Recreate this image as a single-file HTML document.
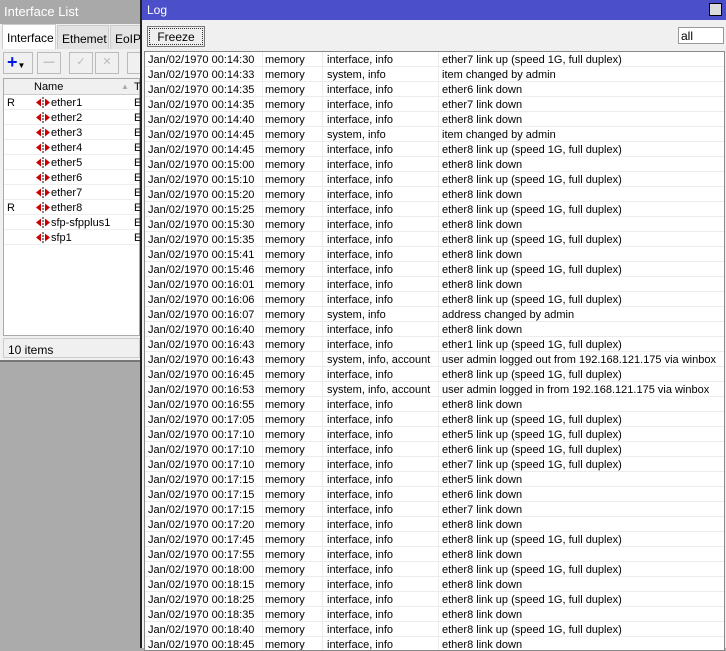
<!DOCTYPE html>
<html><head><meta charset="utf-8"><style>
*{margin:0;padding:0;box-sizing:border-box}
body{width:726px;height:648px;overflow:hidden;background:#ababab;font-family:"Liberation Sans",sans-serif;font-size:11px;color:#000;position:relative}
#ifw{position:absolute;left:0;top:0;width:142px;height:362px;background:#f0f0f0;border-right:1px solid #888;border-bottom:2px solid #777}
#ift{height:24px;background:#a9a9a9;color:#fff;font-size:13px;padding:4px 0 0 4px}
.tab{position:absolute;top:25px;height:24px;font-size:12px;padding:6px 0 0 4px;border:1px solid #ccc;border-bottom:none}
.tb{position:absolute;top:52px;height:22px;width:24px;border:1px solid #bbb;background:#f0f0f0}
#iflist{position:absolute;left:3px;top:78px;width:137px;height:258px;background:#fff;border:1px solid #aaa}
.ir{height:15px;line-height:16px;border-bottom:1px solid #eee;position:relative;white-space:nowrap}
.ir span{position:absolute}
.ir svg{vertical-align:-2px;margin-right:1px}
#status{position:absolute;left:3px;top:338px;width:137px;height:20px;border:1px solid #ccc;padding:4px 4px;font-size:12px}
#log{position:absolute;left:140px;top:0;width:586px;height:648px;background:#f0f0f0;border-left:2px solid #222}
#lt{height:20px;background:#4b4fc9;color:#fff;font-size:12px;padding:3px 0 0 5px;position:relative}
#freeze{position:absolute;left:5px;top:26px;width:58px;height:21px;border:1px solid #777;background:#eee;font-size:12px;text-align:center;line-height:21px;outline:1px dotted #333;outline-offset:-3px}
#all{position:absolute;left:536px;top:27px;width:46px;height:17px;background:#fff;border:1px solid #999;font-size:12px;padding-left:2px;line-height:17px}
#list{position:absolute;left:2px;top:51px;width:581px;height:600px;background:#fff;border:1px solid #888;overflow:hidden}
.r{height:15px;line-height:16px;border-bottom:1px solid #ececec;position:relative;white-space:nowrap;font-size:11px}
.r span{position:absolute;top:0;height:15px;padding-left:3px}
.r .a{left:0;width:118px;border-right:1px solid #ececec}
.r .b{left:118px;width:60px;border-right:1px solid #ececec;padding-left:2px}
.r .c{left:178px;width:116px;border-right:1px solid #ececec;padding-left:4px}
.r .d{left:294px;padding-left:3px}
</style></head><body>
<svg width="0" height="0" style="position:absolute"><defs><symbol id="ic" viewBox="0 0 14 11"><path d="M0 5.5L5 1.5V9.5Z" fill="#c00"/><path d="M14 5.5L9 1.5V9.5Z" fill="#c00"/><path d="M7 0V11" stroke="#333" stroke-width="1.2" stroke-dasharray="2 1"/></symbol></defs></svg>
<div id="ifw">
<div id="ift">Interface List</div>
<div class="tab" style="left:2px;width:54px;background:#fff;height:25px;top:24px">Interface</div>
<div class="tab" style="left:57px;width:52px;background:#e3e3e3">Ethemet</div>
<div class="tab" style="left:110px;width:32px;background:#e3e3e3">EoIP</div>
<div class="tb" style="left:3px;width:30px;color:#0018e0;font-size:18px;font-weight:bold;line-height:18px;padding-left:3px">+<span style="font-size:8px;color:#000">▼</span></div>
<div class="tb" style="left:37px;color:#999;text-align:center;line-height:18px">—</div>
<div class="tb" style="left:69px;color:#bbb;text-align:center;line-height:18px">✓</div>
<div class="tb" style="left:95px;color:#bbb;text-align:center;line-height:18px">✕</div>
<div class="tb" style="left:127px;width:14px"></div>
<div id="iflist">
<div class="ir" style="background:#f0f0f0;height:16px;border-bottom:1px solid #ccc"><span style="left:30px">Name</span><span style="left:117px;color:#aaa;font-size:8px">▲</span><span style="left:130px">T</span></div>
<div class="ir"><span style="left:3px">R</span><span style="left:32px"><svg width="14" height="11"><use href="#ic"/></svg>ether1</span><span style="left:130px">E</span></div>
<div class="ir"><span style="left:32px"><svg width="14" height="11"><use href="#ic"/></svg>ether2</span><span style="left:130px">E</span></div>
<div class="ir"><span style="left:32px"><svg width="14" height="11"><use href="#ic"/></svg>ether3</span><span style="left:130px">E</span></div>
<div class="ir"><span style="left:32px"><svg width="14" height="11"><use href="#ic"/></svg>ether4</span><span style="left:130px">E</span></div>
<div class="ir"><span style="left:32px"><svg width="14" height="11"><use href="#ic"/></svg>ether5</span><span style="left:130px">E</span></div>
<div class="ir"><span style="left:32px"><svg width="14" height="11"><use href="#ic"/></svg>ether6</span><span style="left:130px">E</span></div>
<div class="ir"><span style="left:32px"><svg width="14" height="11"><use href="#ic"/></svg>ether7</span><span style="left:130px">E</span></div>
<div class="ir"><span style="left:3px">R</span><span style="left:32px"><svg width="14" height="11"><use href="#ic"/></svg>ether8</span><span style="left:130px">E</span></div>
<div class="ir"><span style="left:32px"><svg width="14" height="11"><use href="#ic"/></svg>sfp-sfpplus1</span><span style="left:130px">E</span></div>
<div class="ir"><span style="left:32px"><svg width="14" height="11"><use href="#ic"/></svg>sfp1</span><span style="left:130px">E</span></div>
</div>
<div id="status">10 items</div>
</div>
<div id="log">
<div id="lt">Log<span style="position:absolute;right:4px;top:3px;width:13px;height:13px;border:1px solid #000;background:#ddd"></span></div>
<div id="freeze">Freeze</div>
<div id="all">all</div>
<div id="list">
<div class="r"><span class="a">Jan/02/1970 00:14:30</span><span class="b">memory</span><span class="c">interface, info</span><span class="d">ether7 link up (speed 1G, full duplex)</span></div>
<div class="r"><span class="a">Jan/02/1970 00:14:33</span><span class="b">memory</span><span class="c">system, info</span><span class="d">item changed by admin</span></div>
<div class="r"><span class="a">Jan/02/1970 00:14:35</span><span class="b">memory</span><span class="c">interface, info</span><span class="d">ether6 link down</span></div>
<div class="r"><span class="a">Jan/02/1970 00:14:35</span><span class="b">memory</span><span class="c">interface, info</span><span class="d">ether7 link down</span></div>
<div class="r"><span class="a">Jan/02/1970 00:14:40</span><span class="b">memory</span><span class="c">interface, info</span><span class="d">ether8 link down</span></div>
<div class="r"><span class="a">Jan/02/1970 00:14:45</span><span class="b">memory</span><span class="c">system, info</span><span class="d">item changed by admin</span></div>
<div class="r"><span class="a">Jan/02/1970 00:14:45</span><span class="b">memory</span><span class="c">interface, info</span><span class="d">ether8 link up (speed 1G, full duplex)</span></div>
<div class="r"><span class="a">Jan/02/1970 00:15:00</span><span class="b">memory</span><span class="c">interface, info</span><span class="d">ether8 link down</span></div>
<div class="r"><span class="a">Jan/02/1970 00:15:10</span><span class="b">memory</span><span class="c">interface, info</span><span class="d">ether8 link up (speed 1G, full duplex)</span></div>
<div class="r"><span class="a">Jan/02/1970 00:15:20</span><span class="b">memory</span><span class="c">interface, info</span><span class="d">ether8 link down</span></div>
<div class="r"><span class="a">Jan/02/1970 00:15:25</span><span class="b">memory</span><span class="c">interface, info</span><span class="d">ether8 link up (speed 1G, full duplex)</span></div>
<div class="r"><span class="a">Jan/02/1970 00:15:30</span><span class="b">memory</span><span class="c">interface, info</span><span class="d">ether8 link down</span></div>
<div class="r"><span class="a">Jan/02/1970 00:15:35</span><span class="b">memory</span><span class="c">interface, info</span><span class="d">ether8 link up (speed 1G, full duplex)</span></div>
<div class="r"><span class="a">Jan/02/1970 00:15:41</span><span class="b">memory</span><span class="c">interface, info</span><span class="d">ether8 link down</span></div>
<div class="r"><span class="a">Jan/02/1970 00:15:46</span><span class="b">memory</span><span class="c">interface, info</span><span class="d">ether8 link up (speed 1G, full duplex)</span></div>
<div class="r"><span class="a">Jan/02/1970 00:16:01</span><span class="b">memory</span><span class="c">interface, info</span><span class="d">ether8 link down</span></div>
<div class="r"><span class="a">Jan/02/1970 00:16:06</span><span class="b">memory</span><span class="c">interface, info</span><span class="d">ether8 link up (speed 1G, full duplex)</span></div>
<div class="r"><span class="a">Jan/02/1970 00:16:07</span><span class="b">memory</span><span class="c">system, info</span><span class="d">address changed by admin</span></div>
<div class="r"><span class="a">Jan/02/1970 00:16:40</span><span class="b">memory</span><span class="c">interface, info</span><span class="d">ether8 link down</span></div>
<div class="r"><span class="a">Jan/02/1970 00:16:43</span><span class="b">memory</span><span class="c">interface, info</span><span class="d">ether1 link up (speed 1G, full duplex)</span></div>
<div class="r"><span class="a">Jan/02/1970 00:16:43</span><span class="b">memory</span><span class="c">system, info, account</span><span class="d">user admin logged out from 192.168.121.175 via winbox</span></div>
<div class="r"><span class="a">Jan/02/1970 00:16:45</span><span class="b">memory</span><span class="c">interface, info</span><span class="d">ether8 link up (speed 1G, full duplex)</span></div>
<div class="r"><span class="a">Jan/02/1970 00:16:53</span><span class="b">memory</span><span class="c">system, info, account</span><span class="d">user admin logged in from 192.168.121.175 via winbox</span></div>
<div class="r"><span class="a">Jan/02/1970 00:16:55</span><span class="b">memory</span><span class="c">interface, info</span><span class="d">ether8 link down</span></div>
<div class="r"><span class="a">Jan/02/1970 00:17:05</span><span class="b">memory</span><span class="c">interface, info</span><span class="d">ether8 link up (speed 1G, full duplex)</span></div>
<div class="r"><span class="a">Jan/02/1970 00:17:10</span><span class="b">memory</span><span class="c">interface, info</span><span class="d">ether5 link up (speed 1G, full duplex)</span></div>
<div class="r"><span class="a">Jan/02/1970 00:17:10</span><span class="b">memory</span><span class="c">interface, info</span><span class="d">ether6 link up (speed 1G, full duplex)</span></div>
<div class="r"><span class="a">Jan/02/1970 00:17:10</span><span class="b">memory</span><span class="c">interface, info</span><span class="d">ether7 link up (speed 1G, full duplex)</span></div>
<div class="r"><span class="a">Jan/02/1970 00:17:15</span><span class="b">memory</span><span class="c">interface, info</span><span class="d">ether5 link down</span></div>
<div class="r"><span class="a">Jan/02/1970 00:17:15</span><span class="b">memory</span><span class="c">interface, info</span><span class="d">ether6 link down</span></div>
<div class="r"><span class="a">Jan/02/1970 00:17:15</span><span class="b">memory</span><span class="c">interface, info</span><span class="d">ether7 link down</span></div>
<div class="r"><span class="a">Jan/02/1970 00:17:20</span><span class="b">memory</span><span class="c">interface, info</span><span class="d">ether8 link down</span></div>
<div class="r"><span class="a">Jan/02/1970 00:17:45</span><span class="b">memory</span><span class="c">interface, info</span><span class="d">ether8 link up (speed 1G, full duplex)</span></div>
<div class="r"><span class="a">Jan/02/1970 00:17:55</span><span class="b">memory</span><span class="c">interface, info</span><span class="d">ether8 link down</span></div>
<div class="r"><span class="a">Jan/02/1970 00:18:00</span><span class="b">memory</span><span class="c">interface, info</span><span class="d">ether8 link up (speed 1G, full duplex)</span></div>
<div class="r"><span class="a">Jan/02/1970 00:18:15</span><span class="b">memory</span><span class="c">interface, info</span><span class="d">ether8 link down</span></div>
<div class="r"><span class="a">Jan/02/1970 00:18:25</span><span class="b">memory</span><span class="c">interface, info</span><span class="d">ether8 link up (speed 1G, full duplex)</span></div>
<div class="r"><span class="a">Jan/02/1970 00:18:35</span><span class="b">memory</span><span class="c">interface, info</span><span class="d">ether8 link down</span></div>
<div class="r"><span class="a">Jan/02/1970 00:18:40</span><span class="b">memory</span><span class="c">interface, info</span><span class="d">ether8 link up (speed 1G, full duplex)</span></div>
<div class="r"><span class="a">Jan/02/1970 00:18:45</span><span class="b">memory</span><span class="c">interface, info</span><span class="d">ether8 link down</span></div>
</div>
</div>
</body></html>
